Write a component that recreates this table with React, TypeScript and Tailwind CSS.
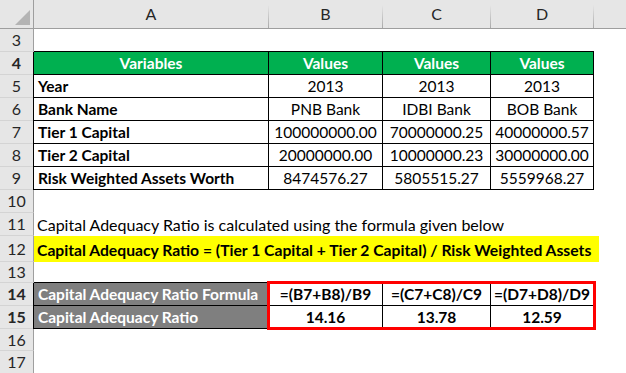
import React from "react"

// Column widths (A..D) taken from the sheet grid
const colA = "w-[236px] -ml-px border-l border-l-black"
const colB = "w-[114px]"
const colC = "w-[108px]"
const colD = "w-[103px]"

interface DataRow {
	n: number
	label: string
	values: string[]
}

const dataRows: DataRow[] = [
	{ n: 5, label: "Year", values: ["2013", "2013", "2013"] },
	{ n: 6, label: "Bank Name", values: ["PNB Bank", "IDBI Bank", "BOB Bank"] },
	{ n: 7, label: "Tier 1 Capital", values: ["100000000.00", "70000000.25", "40000000.57"] },
	{ n: 8, label: "Tier 2 Capital", values: ["20000000.00", "10000000.23", "30000000.00"] },
	{ n: 9, label: "Risk Weighted Assets Worth", values: ["8474576.27", "5805515.27", "5559968.27"] },
]

function RowHead({ n }: { n: number }) {
	return (
		<div className="w-[34px] shrink-0 bg-[#e6e6e6] border-r border-r-[#9f9f9f] border-b border-b-[#d4d4d4] flex items-center justify-center text-[16px] text-[#262626]">
			{n}
		</div>
	)
}

function ColHead({ label, className }: { label: string; className: string }) {
	return (
		<div className={`flex shrink-0 ${className}`}>
			<div className="flex-1 flex items-center justify-center text-[16px] text-[#262626]">{label}</div>
			<div className="w-px self-end h-[23px] bg-gradient-to-b from-[#e6e6e6] to-[#a9a9a9]" />
		</div>
	)
}

export default function App() {
	const cell = "shrink-0 flex items-end pb-[2px] border-r border-b border-black whitespace-nowrap"

	return (
		<div className="w-[626px] h-[373px] overflow-hidden bg-white font-['Lato',sans-serif] text-[15.5px] leading-[18px] text-black">
			{/* Column letters */}
			<div className="flex h-[29px] bg-[#e6e6e6] border-b border-b-[#9e9e9e]">
				<div className="w-[34px] shrink-0 border-r border-r-[#9e9e9e]">
					<svg width="33" height="28" viewBox="0 0 33 28">
						<polygon points="30,10 30,25 15,25" fill="#b4b4b4" />
					</svg>
				</div>
				<ColHead label="A" className="w-[235px]" />
				<ColHead label="B" className={colB} />
				<ColHead label="C" className={colC} />
				<ColHead label="D" className={colD} />
				<div className="flex-1" />
			</div>

			{/* Row 3 */}
			<div className="flex h-[23px]">
				<RowHead n={3} />
				<div className="w-[560px] border-b border-black" />
			</div>

			{/* Row 4: table header */}
			<div className="flex h-[23px] font-bold text-white">
				<RowHead n={4} />
				<div className={`${cell} ${colA} justify-center bg-[#00b050]`}>Variables</div>
				<div className={`${cell} ${colB} justify-center bg-[#00b050]`}>Values</div>
				<div className={`${cell} ${colC} justify-center bg-[#00b050]`}>Values</div>
				<div className={`${cell} ${colD} justify-center bg-[#00b050]`}>Values</div>
			</div>

			{/* Rows 5-9 */}
			{dataRows.map((row) => (
				<div key={row.n} className="flex h-[23px]">
					<RowHead n={row.n} />
					<div className={`${cell} ${colA} pl-[4px] font-bold`}>{row.label}</div>
					<div className={`${cell} ${colB} justify-center`}>{row.values[0]}</div>
					<div className={`${cell} ${colC} justify-center`}>{row.values[1]}</div>
					<div className={`${cell} ${colD} justify-center`}>{row.values[2]}</div>
				</div>
			))}

			{/* Row 10 */}
			<div className="flex h-[23px]">
				<RowHead n={10} />
			</div>

			{/* Row 11 */}
			<div className="flex h-[23px]">
				<RowHead n={11} />
				<div className="flex items-end pb-[2px] pl-[3px] text-[16px] whitespace-nowrap">
					Capital Adequacy Ratio is calculated using the formula given below
				</div>
			</div>

			{/* Row 12 */}
			<div className="flex h-[26px]">
				<RowHead n={12} />
				<div className="w-[565px] bg-[#ffff00] flex items-center pl-[3px] pt-[1px] text-[15.7px] font-bold whitespace-nowrap">
					Capital Adequacy Ratio = (Tier 1 Capital + Tier 2 Capital) / Risk Weighted Assets
				</div>
			</div>

			{/* Row 13 */}
			<div className="flex h-[21px]">
				<RowHead n={13} />
				<div className="w-[560px] border-b border-black" />
			</div>

			{/* Rows 14-15: result block */}
			<div className="flex font-bold">
				<div>
					<div className="flex h-[23px]">
						<RowHead n={14} />
						<div className={`${cell} ${colA} pl-[4px] bg-[#7f7f7f] text-white`}>Capital Adequacy Ratio Formula</div>
					</div>
					<div className="flex h-[23px]">
						<RowHead n={15} />
						<div className={`${cell} ${colA} pl-[4px] bg-[#7f7f7f] text-white`}>Capital Adequacy Ratio</div>
					</div>
				</div>
				<div className="relative">
					<div className="flex h-[23px]">
						<div className={`${cell} ${colB} justify-center`}>=(B7+B8)/B9</div>
						<div className={`${cell} ${colC} justify-center`}>=(C7+C8)/C9</div>
						<div className={`${cell} ${colD} justify-center`}>=(D7+D8)/D9</div>
					</div>
					<div className="flex h-[23px]">
						<div className={`${cell} ${colB} justify-center`}>14.16</div>
						<div className={`${cell} ${colC} justify-center`}>13.78</div>
						<div className={`${cell} ${colD} justify-center`}>12.59</div>
					</div>
					{/* red highlight box */}
					<div className="absolute -top-[2px] -left-[2px] -right-[2px] -bottom-px border-[3px] border-[#ff0000]" />
				</div>
			</div>

			{/* Rows 16-17 */}
			<div className="flex h-[22px]">
				<RowHead n={16} />
			</div>
			<div className="flex h-[23px]">
				<RowHead n={17} />
			</div>
		</div>
	)
}
